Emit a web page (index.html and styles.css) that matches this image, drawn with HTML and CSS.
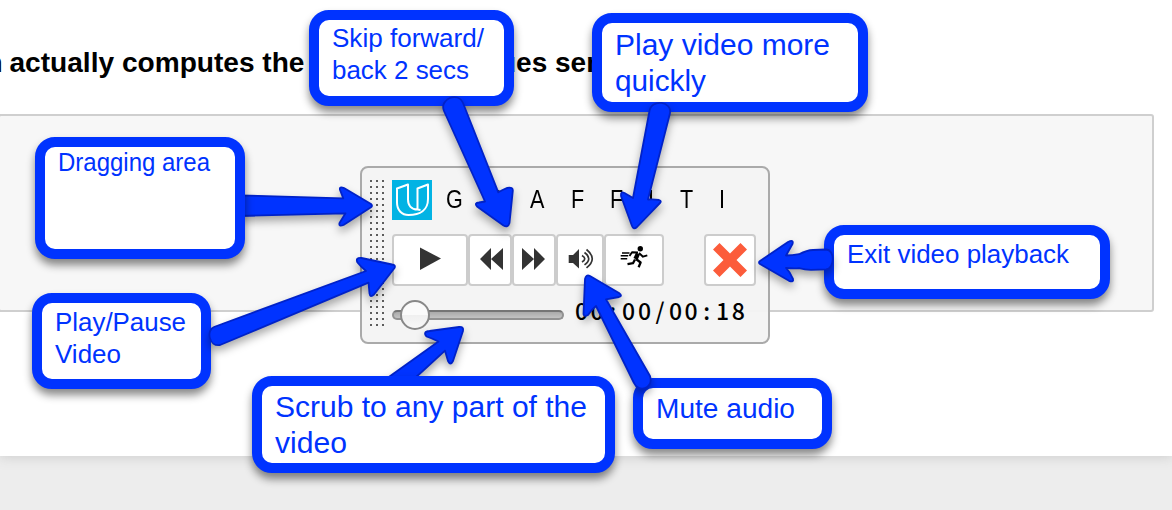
FILE: index.html
```html
<!DOCTYPE html>
<html lang="en">
<head>
<meta charset="utf-8">
<title>Graffiti playback controls</title>
<link rel="stylesheet" href="styles.css">
</head>
<body>
<main class="stage">
  <section class="notebook">
    <h2 class="heading"><svg class="heading-svg" width="640" height="50"><text x="-14.5" y="32">n</text><text x="9.500" y="32" textLength="295" lengthAdjust="spacingAndGlyphs">actually computes the</text><text x="499" y="32">ues send</text></svg></h2>
    <div class="code-cell"></div>
  </section>

  <section class="player">
    <svg class="grip" width="14" height="150"><defs><pattern id="dots" width="6" height="6" patternUnits="userSpaceOnUse"><rect width="2" height="2" fill="#5c5c5c"/></pattern></defs><rect width="14" height="150" fill="url(#dots)"/></svg>
    <div class="panel">
      <div class="brand">
        <svg class="logo" viewBox="0 0 40 40"><rect width="40" height="40" fill="#02b3e4"/><path d="M16 4.500 5 8.500v14c0 8 5 12.500 11.500 12.500C28 35 36 30 36 19V4.500L25.500 8.500v21c-6 0-9.500-4-9.500-10zM25.500 29.500l3 .5" fill="none" stroke="#fff" stroke-width="2" stroke-linejoin="round"/></svg>
        <span class="letter g">G</span><span class="letter r">R</span><span class="letter a">A</span><span class="letter f1">F</span><span class="letter f2">F</span><span class="letter i1">I</span><span class="letter t">T</span><span class="letter i2">I</span>
      </div>
      <div class="buttons">
        <button class="btn play"><svg width="72" height="48"><path d="m26 11.500 21 11L26 34z"/></svg></button>
        <button class="btn skip"><svg width="40" height="48"><path d="M21 12v22L10 23zM33 12v22L21 23z"/></svg></button>
        <button class="btn skip"><svg width="40" height="48"><path d="M8 12v22l12-11zM20 12v22l11-11z"/></svg></button>
        <button class="btn sound"><svg width="44" height="48"><path d="M10.700 19h4.300l6-6v19.500l-6-5.500h-4.300z"/><path class="wave" d="M24 19.500q5.500 3.200 0 6.400M26.500 16.500q8.500 6.200 0 12.400M28.500 13.500q11.500 9.200 0 18.400"/></svg></button>
        <button class="btn run"><svg width="56" height="48"><circle cx="34.300" cy="12.700" r="2.700"/><path class="torso" d="m32 17.500-2.500 5.500"/><path class="leg" d="m29 23.500-2 3.700-5.500 1M30 23l4.600 3.500-2 4.700"/><path class="limb" d="m32 16.500-6-.2-2.500 3.700M33 17l4 3.700 4.300-1.400"/><path class="dash" d="M16 17h7.500M14.700 19.800h7.500M14.700 22.700h6.500"/></svg></button>
        <button class="btn exit"><svg width="48" height="48"><path d="m13.500 7 10.500 10.500L34.500 7l6.500 6.500L30.500 24 41 34.500 34.500 41 24 30.500 13.500 41 7 34.500 17.500 24 7 13.500z"/></svg></button>
      </div>
      <div class="scrub">
        <div class="track"><span class="thumb"></span></div>
        <svg class="time" width="176" height="30"><text y="20" x="6.500 22 37.700 53.500 69.500 85 100.500 116 131.700 147.500 163.300">00:00/00:18</text></svg>
      </div>
    </div>
  </section>

  <svg class="arrows" viewBox="0 0 1172 510"><path d="M240 195.300 343.300 198.300 340 190q-1-4 4-2L371 204q2 1.700 0 3.300L343.500 225q-5 2-4-2l6-9.700L240 216z"/><path d="M386 379 438.500 341.500q-6-3-12-5-4-5 3-5.500L459 327q5-.5 4 4l-10 30q-2.500 5-5 0l-3-10.300L414 379z"/></svg>

  <div class="callout drag"><svg><text x="13" y="24" textLength="152" lengthAdjust="spacingAndGlyphs">Dragging area</text></svg></div>
  <div class="callout skip-note"><svg><text x="13" y="27" textLength="152" lengthAdjust="spacingAndGlyphs">Skip forward/</text><text x="13" y="59" textLength="137" lengthAdjust="spacingAndGlyphs">back 2 secs</text></svg></div>
  <div class="callout quick large"><svg><text x="13" y="32" textLength="215" lengthAdjust="spacingAndGlyphs">Play video more</text><text x="13" y="68" textLength="91" lengthAdjust="spacingAndGlyphs">quickly</text></svg></div>
  <div class="callout pause"><svg><text x="13" y="28" textLength="131" lengthAdjust="spacingAndGlyphs">Play/Pause</text><text x="13" y="60" textLength="66" lengthAdjust="spacingAndGlyphs">Video</text></svg></div>
  <div class="callout scrub-note large"><svg><text x="13" y="31" textLength="312" lengthAdjust="spacingAndGlyphs">Scrub to any part of the</text><text x="13" y="67" textLength="72" lengthAdjust="spacingAndGlyphs">video</text></svg></div>
  <div class="callout mute medium"><svg><text x="13" y="30" textLength="139" lengthAdjust="spacingAndGlyphs">Mute audio</text></svg></div>
  <div class="callout exit-note"><svg><text x="13" y="28" textLength="222" lengthAdjust="spacingAndGlyphs">Exit video playback</text></svg></div>

  <svg class="arrows" viewBox="0 0 1172 510">
    <path d="M444 111C439 99 458 91 463 103l35.300 89.300q5-3 9-4.500 6-1 5.500 3L509.500 223q-1.500 5-6 2.500L477 206.500q-3-3.500 2-4l6-1z"/>
    <path d="M649.300 112C651 98 673 101 669.800 114L648 199.500q6-.5 11 .5 3 1 1 3l-23 24q-3.500 3-5-1l-11-30q-.5-5 3.500-3l8.500 5z"/>
    <path d="M368.500 282.700 220 345C209 347 206 330 214 327l152-56q-5-4-8.500-8.500-2.500-5 4-4.500l30.500 6.500q4 .5 2.500 3.500L374 294.500q-4 3.500-4.500-1z"/>
    <path d="M634 383 596 306q-4 3-8 9-4 2-4.500-1L585 279q1-5 5-3l29 17q4 3 0 4l-13 2.300L650 376C654 389 638 393 634 383z"/>
    <path d="M760 261 788 242q6-3 4.500 2L786 255.500q6 0 13-1.300 8-4 14-4.200l13-.5c9 0 9 19 0 19.800l-15 .5q-6 0-12-1.700-6 .5-13-.3 4 4 7 11 1 4-4 2L760 264q-2-1.500 0-3z"/>
  </svg>
</main>
</body>
</html>
```
FILE: styles.css
```css
*{box-sizing:border-box}
body{margin:0;font-family:"Liberation Sans",Arial,sans-serif}
.stage{position:relative;width:1172px;height:510px;overflow:hidden;background:#ededed}
.notebook{height:456px;padding-top:40px;background:#fff;box-shadow:0 0 12px 1px #ccc}
.heading{margin:0;height:74px}
.heading-svg{display:block}
.heading-svg text{font-size:28px;font-weight:700;fill:#000}
.code-cell{width:1156px;height:198px;margin-left:-2px;border:2px solid #cfcfcf;border-radius:3px;background:#f7f7f7}
.player{position:absolute;left:360px;top:166px;width:410px;height:178px;padding:12px 8px;display:flex;gap:8px;border:2px solid #aaa;border-radius:8px;background:#f4f4f4f5}
.grip{width:14px;height:150px;flex:none}
.panel{width:366px;flex:none}
.brand{height:40px;display:flex;align-items:center}
.logo{width:40px;height:40px;margin-right:14px;flex:none}
.letter{font:26px "Liberation Sans",Arial,sans-serif;transform-origin:left center;transform:scaleX(.83);height:34px;line-height:32px;flex:none}
.g{width:42px}
.r{width:42px}
.a{width:41px}
.f1{width:39px}
.f2{width:38px}
.i1{width:32px}
.t{width:39px}
.i2{width:8px}
.buttons{height:52px;margin-top:14px;display:flex}
.btn{height:52px;padding:0;border:2px solid #ccc;border-radius:4px;background:#fff;display:flex;align-items:center;justify-content:center;fill:#333;flex:none}
.btn svg{display:block;flex:none}
.play{width:76px}
.skip{width:44px}
.sound{width:48px}
.run{width:60px;fill:#000}
.exit{width:52px;margin-left:40px;fill:#fc5c3b}
.wave,.limb,.torso,.leg,.dash{fill:none;stroke-linejoin:round}
.wave{stroke:#333;stroke-width:1.7}
.limb{stroke:#000;stroke-width:1.9}
.torso{stroke:#000;stroke-width:4.4}
.leg{stroke:#000;stroke-width:2.3}
.dash{stroke:#000;stroke-width:1.4}
.scrub{height:50px;display:flex;padding-top:14px}
.track{position:relative;width:172px;height:10px;margin-top:10px;border-radius:5px;border:2px solid #929292;border-top-color:#757575;background:linear-gradient(#aaa,#c2c2c2);flex:none}
.thumb{position:absolute;left:6px;top:-12px;width:30px;height:30px;border:2px solid #888;border-radius:50%;background:linear-gradient(#fafafa 50%,#efefef 50%,#f8f8f8)}
.time{margin-left:11px;flex:none;overflow:visible}
.time text{font:500 23px "Noto Sans CJK JP","Noto Sans",sans-serif;text-anchor:middle}
.callout{position:absolute;border:10px solid #03f;border-radius:20px;background:#fff;box-shadow:0 6px 9px #0007}
.callout svg{display:block;width:100%;height:100%;overflow:visible}
.callout text{font-size:25px;fill:#03f}
.large text{font-size:29.5px}
.medium text{font-size:27px}
.drag{left:35px;top:137px;width:210px;height:122px}
.skip-note{left:309px;top:10px;width:205px;height:96px}
.quick{left:592px;top:13px;width:276px;height:99px}
.pause{left:32px;top:293px;width:179px;height:96px}
.scrub-note{left:252px;top:376px;width:363px;height:97px}
.mute{left:633px;top:378px;width:199px;height:71px}
.exit-note{left:824px;top:225px;width:286px;height:74px}
.arrows{position:absolute;left:0;top:0;width:1172px;height:510px;filter:drop-shadow(0 5px 4px #0005)}
.arrows path{fill:#03f;stroke:#0022c8;stroke-width:1.8;stroke-linejoin:round}
```
